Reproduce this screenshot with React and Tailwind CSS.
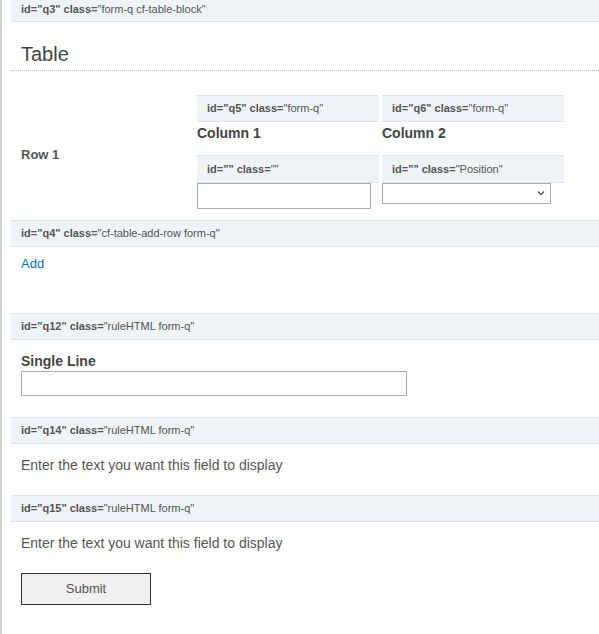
import React from "react";

function Bar({ id, cls, className = "" }) {
  return (
    <div
      className={
        "flex items-center bg-[#eff3f6] border-b border-[#d8e4ef] px-[10px] text-[11px] text-[#555] whitespace-pre " +
        className
      }
    >
      <span className="font-bold">id="{id}" class=</span>
      <span>"{cls}"</span>
    </div>
  );
}

function Column({ qid, title, cls, children }) {
  return (
    <div className="w-[182px] flex flex-col">
      <Bar id={qid} cls="form-q" className="h-[27px] border-t" />
      <div className="h-[33px] text-[14px] font-bold text-[#444] leading-[22px]">{title}</div>
      <Bar id="" cls={cls} className="h-[28px] border-t" />
      {children}
    </div>
  );
}

export default function App() {
  return (
    <div
      className="min-h-[634px] border-l-2 border-[#d4d4d4] pl-[9px] bg-white text-[#444]"
      style={{ fontFamily: '"Liberation Sans", Arial, sans-serif' }}
    >
      <Bar id="q3" cls="form-q cf-table-block" className="h-[22px] pb-[2px]" />

      <div className="mt-[20px] px-[10px] pb-[4px] border-b border-dotted border-[#bbb]">
        <h2 className="text-[20px] leading-[24px] text-[#444]">Table</h2>
      </div>

      <div className="mt-[24px] flex">
        <div className="w-[186px] flex items-center px-[10px] pt-[6px]">
          <span className="text-[13px] font-bold text-[#555]">Row 1</span>
        </div>
        <div className="flex gap-[3px]">
          <Column qid="q5" title="Column 1" cls="">
            <input
              type="text"
              className="w-[174px] h-[26px] border border-[#aaa] bg-white outline-none"
            />
          </Column>
          <Column qid="q6" title="Column 2" cls="Position">
            <div className="relative w-[169px] h-[21px] border border-[#aaa] bg-white">
              <svg
                className="absolute right-[5px] top-[6px]"
                width="8"
                height="6"
                viewBox="0 0 8 6"
              >
                <path d="M1 1.5 L4 4.5 L7 1.5" fill="none" stroke="#555" strokeWidth="1.4" />
              </svg>
            </div>
          </Column>
        </div>
      </div>

      <Bar id="q4" cls="cf-table-add-row form-q" className="mt-[11px] h-[27px] border-t" />
      <div className="px-[10px] pt-[4px] h-[66px]">
        <a href="#" className="text-[13px] text-[#0a6ebd]">Add</a>
      </div>

      <Bar id="q12" cls="ruleHTML form-q" className="h-[27px] border-t" />
      <div className="px-[10px] pt-[12px] pb-[21px]">
        <div className="text-[14px] font-bold text-[#444] leading-[18px]">Single Line</div>
        <input
          type="text"
          className="mt-[1px] w-[386px] h-[25px] border border-[#aaa] bg-white outline-none block"
        />
      </div>

      <Bar id="q14" cls="ruleHTML form-q" className="h-[27px] border-t" />
      <div className="px-[10px] pt-[12px] h-[51px] text-[14px] text-[#555] leading-[18px]">
        Enter the text you want this field to display
      </div>

      <Bar id="q15" cls="ruleHTML form-q" className="h-[27px] border-t" />
      <div className="px-[10px] pt-[12px] text-[14px] text-[#555] leading-[18px]">
        Enter the text you want this field to display
      </div>
      <div className="px-[10px] pt-[21px]">
        <button className="w-[130px] h-[32px] bg-[#f0f0f0] border border-[#333] text-[13px] text-[#555]">
          Submit
        </button>
      </div>
    </div>
  );
}
